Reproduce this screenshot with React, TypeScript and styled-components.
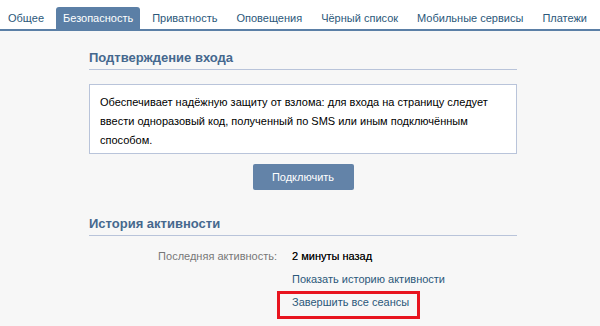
import React from 'react';
import styled, { createGlobalStyle } from 'styled-components';

const tabs = [
	'Общее',
	'Безопасность',
	'Приватность',
	'Оповещения',
	'Чёрный список',
	'Мобильные сервисы',
	'Платежи',
];

const GlobalStyle = createGlobalStyle`
	html, body {
		margin: 0;
		padding: 0;
		background: #f7f7f7;
		font-family: 'Liberation Sans', Arial, sans-serif;
		font-size: 11px;
		color: #000;
	}
`;

const App = () => {
	return (
		<Page>
			<GlobalStyle />
			<TabBar>
				{tabs.map((name) => (
					<Tab key={name} active={name === 'Безопасность'}>
						{name}
					</Tab>
				))}
			</TabBar>
			<Content>
				<Section>
					<Heading>Подтверждение входа</Heading>
					<InfoBox>
						Обеспечивает надёжную защиту от взлома: для входа на страницу следует
						ввести одноразовый код, полученный по SMS или иным подключённым
						способом.
					</InfoBox>
					<ButtonRow>
						<Button>Подключить</Button>
					</ButtonRow>
				</Section>
				<Section>
					<Heading>История активности</Heading>
					<Rows>
						<Row>
							<Label>Последняя активность:</Label>
							<Value>2 минуты назад</Value>
						</Row>
						<Row>
							<Label />
							<Link>Показать историю активности</Link>
						</Row>
						<Row>
							<Label />
							<Link marked>Завершить все сеансы</Link>
						</Row>
					</Rows>
				</Section>
			</Content>
		</Page>
	);
};

const Page = styled('div')({
	width: '600px',
	height: '326px',
	overflow: 'hidden',
	background: '#f7f7f7',
});

const TabBar = styled('div')({
	display: 'flex',
	alignItems: 'flex-end',
	height: '29px',
	padding: '0 0 0 1px',
	background: '#fff',
	borderBottom: '2px solid #5b7fa6',
	gap: '5px',
});

const Tab = styled.div<{ active?: boolean }>`
	height: 22px;
	line-height: 22px;
	padding: 0 7px;
	white-space: nowrap;
	border-radius: 3px 3px 0 0;
	color: ${(p) => (p.active ? '#fff' : '#2b587a')};
	background: ${(p) => (p.active ? '#5b7fa6' : 'transparent')};
`;

const Content = styled('div')({
	width: '428px',
	marginLeft: '89px',
	paddingTop: '19px',
});

const Section = styled('div')({
	marginBottom: '26px',
});

const Heading = styled('div')({
	fontSize: '13px',
	fontWeight: 'bold',
	color: '#45688e',
	lineHeight: '16px',
	paddingBottom: '3px',
	borderBottom: '1px solid #b9c4da',
});

const InfoBox = styled('div')({
	marginTop: '14px',
	background: '#fff',
	border: '1px solid #b9c4da',
	padding: '8px 10px 3px',
	lineHeight: '19px',
});

const ButtonRow = styled('div')({
	display: 'flex',
	justifyContent: 'center',
	marginTop: '10px',
});

const Button = styled('div')({
	width: '101px',
	height: '26px',
	lineHeight: '26px',
	textAlign: 'center',
	borderRadius: '2px',
	background: '#6383a8',
	color: '#fff',
});

const Rows = styled('div')({
	display: 'flex',
	flexDirection: 'column',
	paddingTop: '11px',
	gap: '4px',
});

const Row = styled('div')({
	display: 'flex',
	lineHeight: '19px',
});

const Label = styled('div')({
	width: '188px',
	paddingRight: '15px',
	textAlign: 'right',
	color: '#777',
});

const Value = styled('div')({
	color: '#000',
	textShadow: '0 0 0.2px rgba(0, 0, 0, 0.6)',
});

const Link = styled.div<{ marked?: boolean }>`
	position: relative;
	color: #2b587a;
	white-space: nowrap;

	${(p) =>
		p.marked &&
		`
		&::after {
			content: '';
			position: absolute;
			left: -15px;
			top: -2px;
			width: 137px;
			height: 22px;
			border: 3px solid #e8141f;
		}
	`}
`;

export default App;
